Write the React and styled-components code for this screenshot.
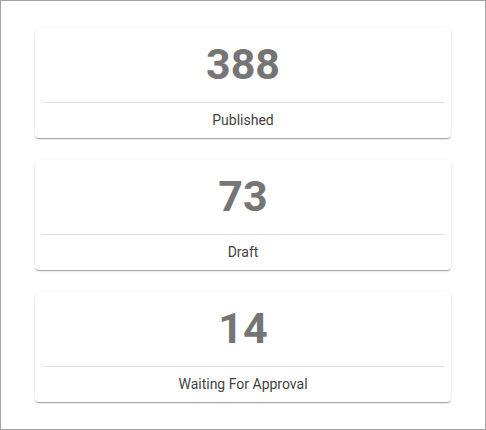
import React from "react";
import styled, { createGlobalStyle } from "styled-components";

const stats = [
  { value: 388, label: "Published" },
  { value: 73, label: "Draft" },
  { value: 14, label: "Waiting For Approval" },
];

const App = () => {
  return (
    <>
      <GlobalStyle />
      <Frame>
        {stats.map((s) => (
          <Card key={s.label}>
            <Count>{s.value}</Count>
            <Divider />
            <Label>{s.label}</Label>
          </Card>
        ))}
      </Frame>
    </>
  );
};

export default App;

const GlobalStyle = createGlobalStyle`
  html, body {
    margin: 0;
    padding: 0;
    background: #ffffff;
    font-family: Roboto, "Liberation Sans", sans-serif;
  }
`;

const Frame = styled.div`
  box-sizing: border-box;
  width: 486px;
  height: 430px;
  border: 1px solid #a3a3a3;
  padding: 27px 34px 0 34px;
  display: flex;
  flex-direction: column;
  gap: 22px;
  background: #fff;
`;

const Card = styled.div`
  height: 110px;
  background: #fff;
  border-radius: 4px;
  box-shadow: 0 2px 1px -1px rgba(0, 0, 0, 0.2), 0 1px 1px 0 rgba(0, 0, 0, 0.14),
    0 1px 3px 0 rgba(0, 0, 0, 0.12);
  display: flex;
  flex-direction: column;
`;

const Count = styled.div`
  height: 74px;
  display: flex;
  align-items: center;
  justify-content: center;
  font-size: 43px;
  font-weight: 700;
  color: #757575;
  padding-bottom: 2px;
  box-sizing: border-box;
`;

const Divider = styled.div`
  height: 1px;
  margin: 0 7px;
  background: #e0e0e0;
`;

const Label = styled.div`
  flex: 1;
  display: flex;
  align-items: center;
  justify-content: center;
  padding-bottom: 2px;
  font-size: 14px;
  color: #424242;
`;
